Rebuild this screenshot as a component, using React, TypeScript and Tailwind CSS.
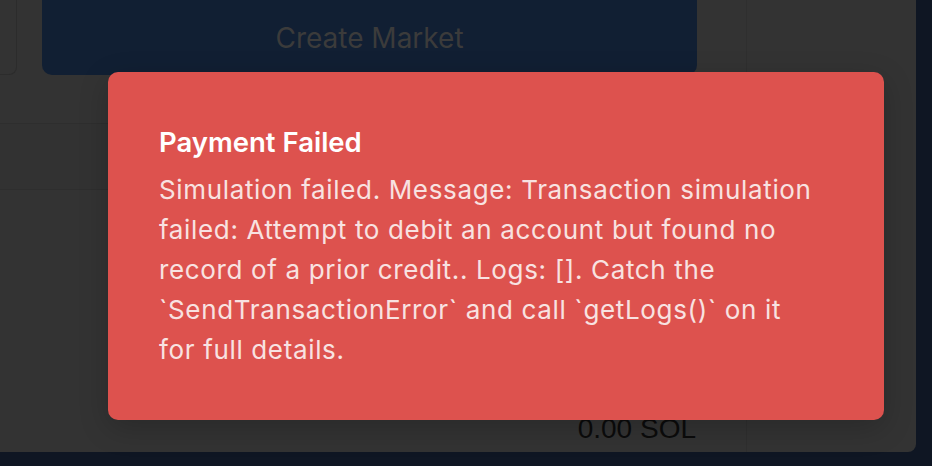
import { FC } from "react";

const Toast: FC<{ title: string; message: string }> = ({ title, message }) => {
  return (
    <div className="absolute left-[108px] top-[72px] w-[776px] h-[348px] rounded-[10px] bg-[#dd524e] shadow-[0_8px_30px_rgba(0,0,0,0.2)] pl-[51px] pr-[65px] pt-[54px]">
      <div className="text-[27.5px] leading-[32px] font-semibold text-white">{title}</div>
      <p className="mt-3 text-[26px] leading-[40px] tracking-[0.65px] text-[#f8e2e1]">{message}</p>
    </div>
  );
};

export default function App() {
  return (
    <div className="relative w-[932px] h-[466px] overflow-hidden bg-[#0f1623] font-['Inter',sans-serif]">
      <div className="flex w-[916px] h-[452px] bg-[#333333] rounded-br-[8px]">
        <div className="flex flex-col w-[747px] border-r border-[#2f2f2f]">
          <div className="flex h-[75px]">
            <div className="w-[17px] h-full border-r border-b border-[#2c2c2c] rounded-br-[8px]"></div>
            <div className="ml-[25px] w-[655px] h-full rounded-b-[10px] bg-[#111f33] flex items-center justify-center">
              <span className="text-[28px] text-[#3b3b3b]">Create Market</span>
            </div>
          </div>
          <div className="h-[49px] border-b border-[#2e2e2e]"></div>
          <div className="h-[66px] bg-[#323232] border-b border-[#2e2e2e]"></div>
          <div className="flex-1 flex items-end justify-end pr-[50px] pb-[7px]">
            <span className="font-['Liberation_Sans',Arial,sans-serif] text-[28px] leading-[32px] text-[#0b0b0b]">0.00 SOL</span>
          </div>
        </div>
        <div className="flex-1"></div>
      </div>

      <Toast
        title="Payment Failed"
        message="Simulation failed. Message: Transaction simulation failed: Attempt to debit an account but found no record of a prior credit.. Logs: []. Catch the `SendTransactionError` and call `getLogs()` on it for full details."
      />
    </div>
  );
}
